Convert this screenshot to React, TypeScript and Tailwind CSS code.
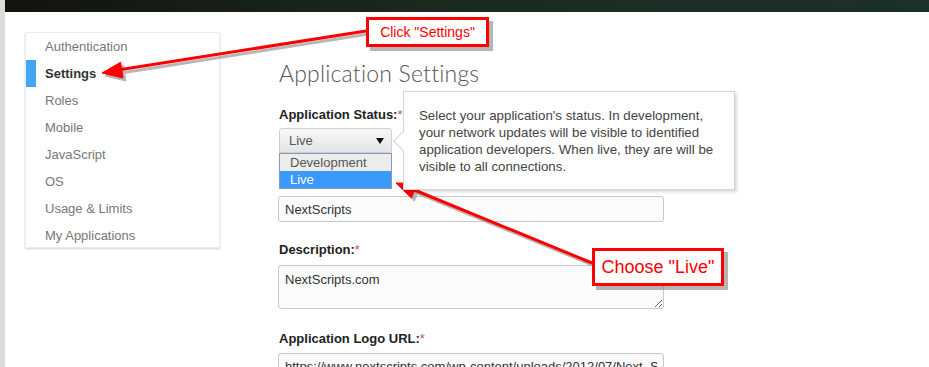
const navItems = [
  "Authentication",
  "Settings",
  "Roles",
  "Mobile",
  "JavaScript",
  "OS",
  "Usage & Limits",
  "My Applications",
];

function Req() {
  return <span className="text-[#d9455f] font-normal">*</span>;
}

function Arrows() {
  return (
    <svg
      className="absolute inset-0 pointer-events-none"
      width="929"
      height="367"
      viewBox="0 0 929 367"
    >
      {/* shadows */}
      <g fill="#9a9a9a" stroke="#9a9a9a" opacity="0.7" transform="translate(3,3)">
        <line x1="366" y1="31" x2="118" y2="70" strokeWidth="3" />
        <polygon points="102,73 120.6,62.2 123,78" />
        <line x1="592" y1="263" x2="412" y2="189" strokeWidth="3" />
        <polygon points="396,183 417.6,183.2 411.4,198" />
      </g>
      <g fill="#ff0000" stroke="#ff0000">
        <line x1="366" y1="31" x2="118" y2="70" strokeWidth="3" />
        <polygon points="102,73 120.6,62.2 123,78" strokeWidth="1" />
        <line x1="592" y1="263" x2="412" y2="189" strokeWidth="3" />
        <polygon points="396,183 417.6,183.2 411.4,198" strokeWidth="1" />
      </g>
    </svg>
  );
}

export default function App() {
  return (
    <div className="relative w-[929px] h-[367px] overflow-hidden bg-white flex font-['Liberation_Sans',Arial,sans-serif]">
      <div className="w-[5px] shrink-0 bg-[#dcdcdc]" />
      <div className="flex-1 flex flex-col">
        <div className="h-[12px] shrink-0 bg-linear-to-r from-[#11140e] via-[#1c2b1f] to-[#1b2f2b]" />
        <div className="flex shrink-0 pl-[20px] pt-[20px]">
          <nav className="w-[195px] h-[216px] shrink-0 bg-white border border-[#ececec] shadow-[0_1px_2px_rgba(0,0,0,0.18)]">
            {navItems.map((item) => {
              const active = item === "Settings";
              return (
                <div key={item} className="flex items-center h-[27px]">
                  <div className={`w-[10px] h-[27px] ${active ? "bg-[#41a6f4]" : ""}`} />
                  <span
                    className={`ml-[9px] text-[13px] ${
                      active ? "font-bold text-[#333]" : "text-[#777]"
                    }`}
                  >
                    {item}
                  </span>
                </div>
              );
            })}
          </nav>

          <main className="ml-[59px] w-[386px] flex flex-col">
            <h1 className="mt-[26px] text-[23px] leading-[30px] font-light text-[#555] font-['Lato',sans-serif] tracking-[0.2px]">
              Application Settings
            </h1>

            <div className="relative mt-[19px]">
              <div className="text-[13px] leading-[16px] font-bold text-[#222]">
                Application Status:<Req />
              </div>
              <div className="mt-[5px] w-[113px] h-[25px] flex items-center justify-between pl-[9px] pr-[7px] border border-[#cfcfcf] rounded-t-[3px] bg-linear-to-b from-[#f8f8f8] to-[#e4e4e4] text-[13px] text-[#555]">
                <span>Live</span>
                <svg width="8" height="6" viewBox="0 0 8 6">
                  <polygon points="0,0 8,0 4,6" fill="#111" />
                </svg>
              </div>

              <div className="absolute left-0 top-[46px] w-[113px] border border-[#7f9db9] bg-white text-[13px] z-10">
                <div className="h-[17px] leading-[17px] pl-[10px] bg-[#ececec] text-[#555]">Development</div>
                <div className="h-[17px] leading-[17px] pl-[10px] bg-[#3b99fc] text-white">Live</div>
              </div>

              <div className="absolute left-[124px] top-[-16px] w-[332px] h-[99px] bg-white border border-[#d4d4d4] shadow-[2px_2px_3px_rgba(0,0,0,0.15)] pl-[15px] pt-[15px] text-[13.3px] leading-[17px] text-[#444] z-10">
                <div className="absolute left-[-8px] top-[42px] w-[14px] h-[14px] bg-white border-l border-b border-[#d4d4d4] rotate-45" />
                <p className="relative">
                  Select your application's status. In development,
                  <br />
                  your network updates will be visible to identified
                  <br />
                  application developers. When live, they are will be
                  <br />
                  visible to all connections.
                </p>
              </div>
            </div>

            <input
              readOnly
              value="NextScripts"
              className="mt-[43px] ml-[-1px] w-[386px] h-[26px] shrink-0 px-[6px] border border-[#c8c8c8] rounded-[3px] bg-[#fbfbfb] text-[13px] text-[#333] outline-none"
            />

            <div className="mt-[20px] text-[13px] leading-[16px] font-bold text-[#222]">
              Description:<Req />
            </div>
            <textarea
              readOnly
              defaultValue="NextScripts.com"
              className="mt-[7px] ml-[-1px] w-[386px] h-[44px] shrink-0 px-[6px] pt-[6px] border border-[#c8c8c8] rounded-[3px] bg-[#fbfbfb] text-[13px] leading-[16px] text-[#333] outline-none resize-y"
            />

            <div className="mt-[22px] text-[13px] leading-[16px] font-bold text-[#222]">
              Application Logo URL:<Req />
            </div>
            <input
              readOnly
              value="https://www.nextscripts.com/wp-content/uploads/2012/07/Next_S"
              className="mt-[6px] ml-[-1px] w-[386px] h-[26px] shrink-0 px-[6px] border border-[#c8c8c8] rounded-[3px] bg-[#fbfbfb] text-[13px] text-[#333] outline-none"
            />
          </main>
        </div>
      </div>

      <Arrows />

      <div className="absolute left-[366px] top-[17px] w-[123px] h-[30px] flex items-center justify-center bg-white border-[3px] border-[#ff0000] shadow-[4px_4px_0_rgba(120,120,120,0.55)] text-[14px] text-[#ff0000]">
        Click "Settings"
      </div>
      <div className="absolute left-[592px] top-[248px] w-[132px] h-[38px] flex items-center justify-center bg-white border-[3px] border-[#ff0000] shadow-[4px_4px_0_rgba(120,120,120,0.55)] text-[18px] text-[#ff0000]">
        Choose "Live"
      </div>
    </div>
  );
}
